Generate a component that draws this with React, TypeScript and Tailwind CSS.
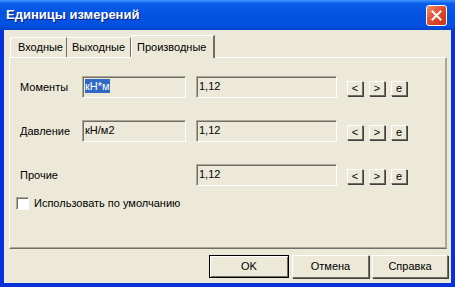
import React from "react";

const sunken =
  "border border-t-[#ACA899] border-l-[#ACA899] border-b-white border-r-white shadow-[inset_1px_1px_0_#716F64]";

function Field({ text, width, selected }: { text: string; width: string; selected?: boolean }) {
  return (
    <div className={`${width} h-[22px] bg-[#ECE9D8] ${sunken} flex items-start pl-[2px] pt-[2px]`}>
      <span className={selected ? "bg-[#316AC5] text-white leading-[14px]" : "leading-[14px]"}>{text}</span>
    </div>
  );
}

function SmallBtn({ label }: { label: string }) {
  return (
    <div className="w-[16px] h-[15px] bg-[#ECE9D8] border border-t-white border-l-white border-b-[#716F64] border-r-[#716F64] shadow-[1px_1px_0_#404040] flex items-center justify-center text-[11px] leading-none">
      {label}
    </div>
  );
}

function Row({ label, unit, selected }: { label: string; unit?: string; selected?: boolean }) {
  return (
    <div className="flex items-start h-[22px]">
      <div className="w-[62px] h-[22px] flex items-center">{label}</div>
      {unit ? <Field text={unit} width="w-[104px]" selected={selected} /> : <div className="w-[104px]" />}
      <div className="ml-[10px]">
        <Field text="1,12" width="w-[141px]" />
      </div>
      <div className="ml-[10px] mt-[5px] flex gap-[6px]">
        <SmallBtn label="<" />
        <SmallBtn label=">" />
        <SmallBtn label="e" />
      </div>
    </div>
  );
}

function DlgButton({ label, width, def }: { label: string; width: string; def?: boolean }) {
  return (
    <div
      className={`${width} h-[23px] flex items-center justify-center bg-[#ECE9D8] border ${
        def
          ? "border-black shadow-[inset_1px_1px_0_white,inset_-1px_-1px_0_#716F64]"
          : "border-t-white border-l-white border-b-[#716F64] border-r-[#716F64] shadow-[1px_1px_0_#404040]"
      }`}
    >
      {label}
    </div>
  );
}

export default function App() {
  return (
    <div
      className="w-[455px] h-[287px] flex flex-col bg-[#0831D9] text-[11px] text-black"
      style={{ fontFamily: '"Liberation Sans", Arial, sans-serif' }}
    >
      {/* Title bar */}
      <div className="h-[30px] flex items-center justify-between pl-[6px] pr-[8px] bg-[linear-gradient(to_bottom,#3D95FF_0%,#0A5DEB_12%,#0553E3_45%,#0450DF_85%,#0043CC_100%)]">
        <span className="text-white font-bold text-[13px] [text-shadow:1px_1px_0_#0A1E80]">
          Единицы измерений
        </span>
        <div className="w-[21px] h-[21px] rounded-[3px] border border-white bg-[linear-gradient(135deg,#F0906F,#E04A2A_50%,#C8331A)] flex items-center justify-center">
          <svg width="11" height="11" viewBox="0 0 11 11">
            <path d="M1.5 1.5 L9.5 9.5 M9.5 1.5 L1.5 9.5" stroke="white" strokeWidth="2" strokeLinecap="square" />
          </svg>
        </div>
      </div>

      {/* Body */}
      <div className="flex-1 mx-[4px] mb-[4px] bg-[#ECE9D8] flex flex-col">
        {/* Tabs */}
        <div className="flex items-end h-[23px] mt-[4px] pl-[6px]">
          <div className="w-[57px] h-[20px] pl-[7px] flex items-center border-t border-l border-white border-r border-r-[#716F64] rounded-tl-[2px]">
            Входные
          </div>
          <div className="w-[64px] h-[20px] pl-[5px] flex items-center border-t border-white border-r border-r-[#716F64]">
            Выходные
          </div>
          <div className="w-[84px] h-[23px] pl-[5px] -mb-[1px] relative z-10 bg-[#ECE9D8] flex items-start pt-[3px] border-t border-l border-white border-r-2 border-r-[#716F64]">
            Производные
          </div>
        </div>

        {/* Panel */}
        <div className="ml-[5px] w-[438px] h-[192px] border border-t-white border-l-white border-r-[#ACA899] border-b-[#716F64] shadow-[inset_-1px_-1px_0_#ACA899] flex flex-col pt-[18px]">
          <div className="flex flex-col gap-[22px] pl-[10px]">
            <Row label="Моменты" unit="кН*м" selected />
            <Row label="Давление" unit="кН/м2" />
            <Row label="Прочие" />
          </div>
          <div className="flex items-center mt-[9px] ml-[6px] gap-[5px]">
            <div className={`w-[13px] h-[13px] bg-white ${sunken}`} />
            <span>Использовать по умолчанию</span>
          </div>
        </div>

        {/* Dialog buttons */}
        <div className="flex justify-end gap-[3px] mt-[6px] pr-[3px]">
          <DlgButton label="OK" width="w-[80px]" def />
          <DlgButton label="Отмена" width="w-[77px]" />
          <DlgButton label="Справка" width="w-[76px]" />
        </div>
      </div>
    </div>
  );
}
